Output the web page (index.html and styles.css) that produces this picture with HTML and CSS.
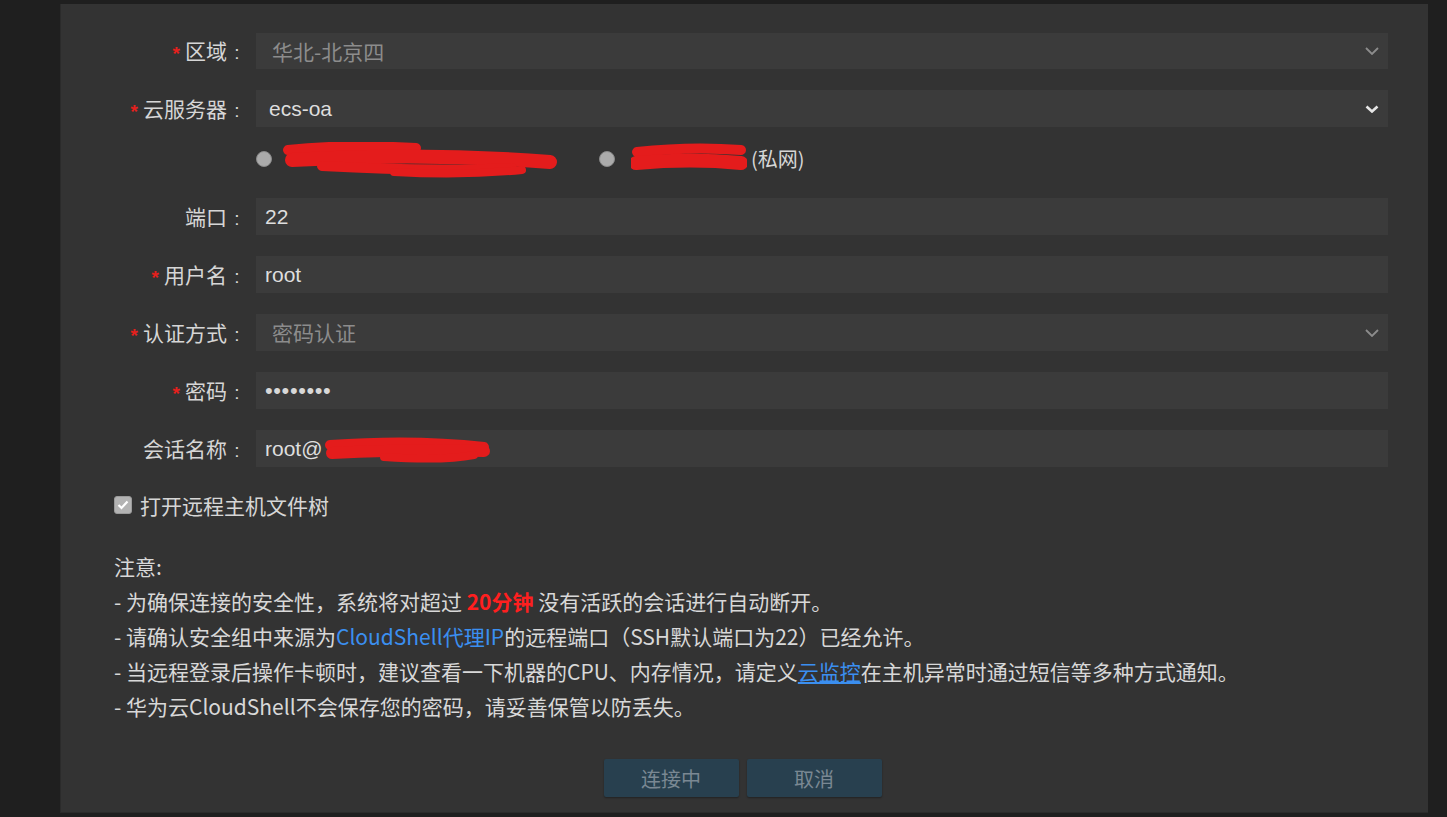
FILE: index.html
```html
<!DOCTYPE html>
<html lang="zh-CN">
<head>
<meta charset="utf-8">
<title>CloudShell 登录</title>
<link rel="stylesheet" href="styles.css">
</head>
<body>
<div class="panel">
  <div class="form">
    <div class="row row-first">
      <div class="label"><span class="req">*</span>区域<span class="colon">:</span></div>
      <div class="field select disabled">
        <span class="val">华北-北京四</span>
        <svg class="chev" width="14" height="8" viewBox="0 0 14 8"><polyline points="1,1 7,7 13,1" fill="none" stroke="#8c8c8c" stroke-width="1.8"/></svg>
      </div>
    </div>
    <div class="row row-server">
      <div class="label"><span class="req">*</span>云服务器<span class="colon">:</span></div>
      <div class="field select">
        <span class="val">ecs-oa</span>
        <svg class="chev" width="14" height="8" viewBox="0 0 14 8"><polyline points="1.5,1.5 7,6.5 12.5,1.5" fill="none" stroke="#e6e6e6" stroke-width="2.6"/></svg>
      </div>
    </div>
    <div class="row row-radio">
      <div class="label"></div>
      <div class="radios">
        <span class="radio"></span>
        <svg class="redact r1" width="276" height="36" viewBox="0 0 276 36"><g fill="none" stroke="#e41c1c" stroke-linecap="round"><path d="M6 8 Q60 2 134 6" stroke-width="10"/><path d="M10 18 Q140 10 268 20" stroke-width="14"/><path d="M40 24 Q150 30 230 26" stroke-width="10"/><path d="M112 30 Q180 34 240 28" stroke-width="8"/></g></svg>
        <span class="radio radio-2"></span>
        <svg class="redact r2" width="116" height="30" viewBox="0 0 116 30"><g fill="none" stroke="#e41c1c" stroke-linecap="round"><path d="M6 9 Q60 3 110 7" stroke-width="10"/><path d="M5 20 Q60 15 110 20" stroke-width="14"/></g></svg>
        <span class="private">(私网)</span>
      </div>
    </div>
    <div class="row">
      <div class="label">端口<span class="colon">:</span></div>
      <div class="field"><span class="val">22</span></div>
    </div>
    <div class="row">
      <div class="label"><span class="req">*</span>用户名<span class="colon">:</span></div>
      <div class="field"><span class="val">root</span></div>
    </div>
    <div class="row">
      <div class="label"><span class="req">*</span>认证方式<span class="colon">:</span></div>
      <div class="field select disabled">
        <span class="val">密码认证</span>
        <svg class="chev" width="14" height="8" viewBox="0 0 14 8"><polyline points="1,1 7,7 13,1" fill="none" stroke="#8c8c8c" stroke-width="1.8"/></svg>
      </div>
    </div>
    <div class="row">
      <div class="label"><span class="req">*</span>密码<span class="colon">:</span></div>
      <div class="field"><span class="val dots">••••••••</span></div>
    </div>
    <div class="row">
      <div class="label">会话名称<span class="colon">:</span></div>
      <div class="field"><span class="val">root@</span><svg class="redact r3" width="167" height="26" viewBox="0 0 167 26"><g fill="none" stroke="#e41c1c" stroke-linecap="round"><path d="M6 8 Q90 2 160 10" stroke-width="10"/><path d="M8 16 Q90 12 160 14" stroke-width="12"/><path d="M60 20 Q120 24 150 18" stroke-width="8"/></g></svg></div>
    </div>
  </div>

  <div class="check-row">
    <span class="checkbox"><svg width="12" height="10" viewBox="0 0 12 10"><polyline points="1.5,5 4.5,8 10.5,1.5" fill="none" stroke="#ffffff" stroke-width="2.2"/></svg></span>
    <span>打开远程主机文件树</span>
  </div>

  <div class="notes">
    <p>注意:</p>
    <p>- 为确保连接的安全性，系统将对超过 <span class="warn">20分钟</span> 没有活跃的会话进行自动断开。</p>
    <p>- 请确认安全组中来源为<span class="blue">CloudShell代理IP</span>的远程端口（SSH默认端口为22）已经允许。</p>
    <p>- 当远程登录后操作卡顿时，建议查看一下机器的CPU、内存情况，请定义<a class="link">云监控</a>在主机异常时通过短信等多种方式通知。</p>
    <p>- 华为云CloudShell不会保存您的密码，请妥善保管以防丢失。</p>
  </div>

  <div class="actions">
    <button class="btn">连接中</button>
    <button class="btn">取消</button>
  </div>
</div>
</body>
</html>
```

FILE: styles.css
```css
* { box-sizing: border-box; }
html, body { margin: 0; padding: 0; }
body {
  background: #1f1f1f;
  width: 1447px;
  height: 817px;
  overflow: hidden;
  font-family: "Noto Sans CJK SC", "Liberation Sans", sans-serif;
  color: #d6d6d6;
}
.panel {
  margin: 4px 0 0 60px;
  width: 1368px;
  height: 809px;
  background: #333333;
  border-left: 1px solid #2b2b2b;
  border-bottom: 1px solid #2b2b2b;
  padding-top: 29px;
}
.form { display: flex; flex-direction: column; }
.row {
  display: flex;
  align-items: center;
  margin-bottom: 21px;
}
.row-first .field { height: 36px; }
.label {
  width: 186px;
  margin-right: 9px;
  text-align: right;
  font-size: 21px;
  line-height: 1;
  color: #d6d6d6;
  white-space: nowrap;
}
.colon {
  display: inline-block;
  width: 20px;
  text-align: center;
  font-family: "Liberation Sans", sans-serif;
  font-size: 19px;
}
.req {
  color: #e5201d;
  font-family: "Liberation Sans", sans-serif;
  font-size: 19px;
  font-weight: 700;
  margin-right: 5px;
  position: relative;
  top: 1px;
}
.field {
  width: 1132px;
  height: 37px;
  background: #3b3b3b;
  display: flex;
  align-items: center;
  padding: 0 9px 0 9px;
  font-family: "Liberation Sans", "Noto Sans CJK SC", sans-serif;
  font-size: 21px;
  color: #dedede;
}
.field .val { line-height: 1; }
.select { justify-content: space-between; padding-left: 13px; }
.select.disabled { padding-left: 16px; }
.select.disabled .val {
  color: #8c8c8c;
  font-family: "Noto Sans CJK SC", "Liberation Sans", sans-serif;
}
.chev { display: block; }
.dots { letter-spacing: 0.6px; font-size: 22px; color: #d8d8d8; }
.redact { display: block; flex: none; }
.r3 { margin-left: 1px; margin-top: 2px; }

.row-radio { height: 20px; margin-top: 1px; margin-bottom: 29px; }
.radios { display: flex; align-items: center; }
.radio {
  width: 16px;
  height: 16px;
  border-radius: 50%;
  background: #ababab;
  border: 1px solid #8a8a8a;
  flex: none;
  margin-right: 10px;
}
.radio-2 { margin-left: 41px; margin-right: 16px; }
.r1 { margin-top: 1px; }
.r2 { margin-top: -2px; }
.private {
  margin-left: 4px;
  font-size: 20px;
  line-height: 1;
  color: #d6d6d6;
}

.check-row {
  display: flex;
  align-items: center;
  height: 20px;
  margin: 7px 0 0 53px;
  font-size: 21px;
  line-height: 1;
}
.checkbox {
  width: 18px;
  height: 18px;
  border-radius: 3px;
  background: #b3b3b3;
  border: 1px solid #9a9a9a;
  display: flex;
  align-items: center;
  justify-content: center;
  margin-right: 8px;
}

.notes {
  margin: 34px 0 0 53px;
  font-size: 21px;
  line-height: 35px;
  color: #d8d8d8;
}
.notes p { margin: 0; white-space: nowrap; }
.warn { color: #ff1f1f; font-weight: 700; }
.blue { color: #3b8ff0; }
.link { color: #3b8ff0; text-decoration: underline; }

.actions {
  display: flex;
  justify-content: center;
  gap: 8px;
  margin-top: 35px;
  padding-right: 4px;
}
.btn {
  width: 135px;
  height: 38px;
  background: #28404f;
  border: none;
  border-radius: 2px;
  color: #7a8893;
  font-family: "Noto Sans CJK SC", "Liberation Sans", sans-serif;
  font-size: 20px;
  box-shadow: 0 1px 2px rgba(0,0,0,0.35);
  padding: 0;
}
```
